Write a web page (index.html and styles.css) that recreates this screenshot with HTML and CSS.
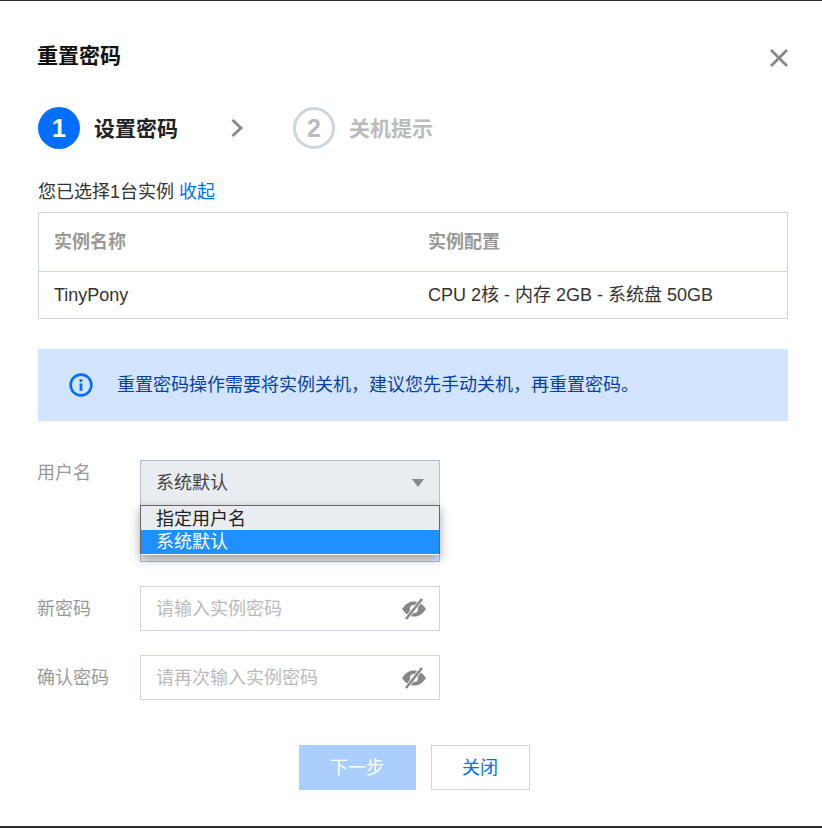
FILE: index.html
```html
<!DOCTYPE html>
<html lang="zh-CN">
<head>
<meta charset="utf-8">
<title>重置密码</title>
<link rel="stylesheet" href="styles.css">
</head>
<body>
<div class="dialog">
  <header class="head">
    <h1 class="title">重置密码</h1>
    <svg class="close" width="20" height="20" viewBox="0 0 20 20"><path d="M2 2 L18 18 M18 2 L2 18" stroke="#888" stroke-width="2.8" fill="none"/></svg>
  </header>
  <div class="steps">
    <span class="num num-on">1</span>
    <span class="step-label">设置密码</span>
    <svg class="chev" width="16" height="20" viewBox="0 0 16 20"><path d="M2.5 2 L11 10 L2.5 18" stroke="#888" stroke-width="2.8" fill="none"/></svg>
    <span class="num num-off">2</span>
    <span class="step-label step-off">关机提示</span>
  </div>
  <p class="picked">您已选择1台实例 <a class="link">收起</a></p>
  <div class="table">
    <div class="row row-head"><span class="c1">实例名称</span><span>实例配置</span></div>
    <div class="row"><span class="c1">TinyPony</span><span>CPU 2核 - 内存 2GB - 系统盘 50GB</span></div>
  </div>
  <div class="notice">
    <svg class="info" width="24" height="24" viewBox="0 0 24 24"><circle cx="12" cy="12" r="10.4" stroke="#006eff" stroke-width="2.6" fill="none"/><rect x="10.6" y="10.4" width="2.8" height="7.4" fill="#006eff"/><rect x="10.6" y="6.2" width="2.8" height="2.8" fill="#006eff"/></svg>
    <span class="lifted">重置密码操作需要将实例关机，建议您先手动关机，再重置密码。</span>
  </div>
  <div class="form">
    <div class="field field-select">
      <label class="lab lab-top">用户名</label>
      <div class="select">
        <div class="select-box"><span>系统默认</span><i class="caret"></i></div>
        <div class="menu">
          <div class="opt opt-first">指定用户名</div>
          <div class="opt opt-on">系统默认</div>
        </div>
      </div>
    </div>
    <div class="field">
      <label class="lab lifted">新密码</label>
      <div class="input"><span class="lifted">请输入实例密码</span>
        <svg width="26" height="22" viewBox="0 0 26 22"><path d="M1 11 C5 5 9 3.500 13 3.500 C17 3.500 21 5 25 11 C21 17 17 18.500 13 18.500 C9 18.500 5 17 1 11 Z M13 7 A4 4 0 1 0 13 15 A4 4 0 1 0 13 7 Z" fill="#888" fill-rule="evenodd"/><path d="M21 1 L5 21" stroke="#fff" stroke-width="4"/><path d="M21 1 L5 21" stroke="#888" stroke-width="2.600"/></svg>
      </div>
    </div>
    <div class="field">
      <label class="lab lifted">确认密码</label>
      <div class="input"><span class="lifted">请再次输入实例密码</span>
        <svg width="26" height="22" viewBox="0 0 26 22"><path d="M1 11 C5 5 9 3.500 13 3.500 C17 3.500 21 5 25 11 C21 17 17 18.500 13 18.500 C9 18.500 5 17 1 11 Z M13 7 A4 4 0 1 0 13 15 A4 4 0 1 0 13 7 Z" fill="#888" fill-rule="evenodd"/><path d="M21 1 L5 21" stroke="#fff" stroke-width="4"/><path d="M21 1 L5 21" stroke="#888" stroke-width="2.600"/></svg>
      </div>
    </div>
  </div>
  <div class="actions">
    <button class="btn btn-primary">下一步</button>
    <button class="btn btn-plain">关闭</button>
  </div>
</div>
</body>
</html>
```
FILE: styles.css
```css
* { box-sizing: border-box; }
html, body { margin: 0; padding: 0; background: #fff; }
body {
  width: 822px;
  height: 828px;
  overflow: hidden;
  font-family: "Liberation Sans", "Noto Sans CJK SC", sans-serif;
  color: #333;
}
.dialog {
  height: 828px;
  border-top: 1px solid #2b2d33;
  border-bottom: 2px solid #2b2d33;
  padding: 0 34px 0 38px;
}
.lifted { padding-bottom: 4px; }
.head { display: flex; justify-content: space-between; align-items: center; padding-top: 36px; height: 73px; }
.title { margin: 0 0 0 -1px; font-size: 21px; line-height: 28px; font-weight: 700; color: #111; }
.close { margin-top: 5px; margin-right: -1px; }
.steps { display: flex; align-items: center; height: 42px; margin-top: 33px; }
.num { width: 42px; height: 42px; border-radius: 50%; display: flex; align-items: center; justify-content: center; font-size: 25px; font-weight: 700; }
.num-on { background: #006eff; color: #fff; }
.num-off { border: 3px solid #cfd5de; color: #bbb; }
.step-label { font-size: 21px; line-height: 28px; font-weight: 700; color: #222; margin-left: 14px; padding-top: 2px; }
.step-off { color: #bbb; }
.chev { margin-left: 52px; margin-right: 47px; }
.picked { margin: 31px 0 0; font-size: 18px; line-height: 24px; color: #333; }
.link { color: #006eff; }
.table { margin-top: 8px; border: 1px solid #cfd5de; width: 750px; }
.row { display: flex; height: 46px; align-items: center; padding-left: 15px; font-size: 18px; line-height: 24px; color: #333; }
.row-head { height: 59px; border-bottom: 1px solid #cfd5de; color: #999; font-weight: 700; }
.c1 { width: 374px; }
.notice { margin-top: 30px; width: 750px; height: 72px; background: #d3e5fe; display: flex; align-items: center; padding-left: 31px; color: #0a3fa6; font-size: 18px; }
.info { margin-right: 24px; }
.form { margin-top: 39px; }
.field { display: flex; align-items: center; height: 45px; margin-bottom: 24px; }
.field-select { align-items: flex-start; height: 102px; margin-bottom: 24px; }
.lab { font-size: 18px; color: #999; margin-left: -1px; flex: 0 0 103px; }
.lab-top { line-height: 26px; }
.select { width: 300px; position: relative; }
.select-box { height: 102px; background: #e9ecf1; border: 1px solid #b3bfcf; padding: 0 15px 0 15px; font-size: 18px; color: #444; display: flex; justify-content: space-between; align-items: flex-start; line-height: 45px; }
.caret { margin-top: 18px; width: 0; height: 0; border-left: 6.500px solid transparent; border-right: 6.500px solid transparent; border-top: 8px solid #888; }
.menu { position: absolute; left: 0; top: 45px; width: 300px; height: 50px; background: #e9ecf1; border: 1px solid #666; border-bottom-color: #fff; box-shadow: 0 4px 10px rgba(0,0,0,.35); font-size: 18px; color: #222; }
.opt { height: 24px; line-height: 24px; padding-left: 15px; }
.opt-first { line-height: 26px; }
.opt-on { background: #1e90ff; color: #fff; }
.input { width: 300px; height: 45px; border: 1px solid #cfd5de; display: flex; align-items: center; justify-content: space-between; padding: 0 12px 0 15px; font-size: 18px; color: #bbb; }
.actions { display: flex; justify-content: center; gap: 15px; margin-top: 45px; padding-left: 2px; }
.btn { height: 45px; font-family: inherit; font-size: 18px; padding: 0 0 4px; }
.btn-primary { width: 117px; background: #aacfff; color: #fff; border: 0; }
.btn-plain { width: 99px; background: #fff; color: #006eff; border: 1px solid #cfd5de; }
```
